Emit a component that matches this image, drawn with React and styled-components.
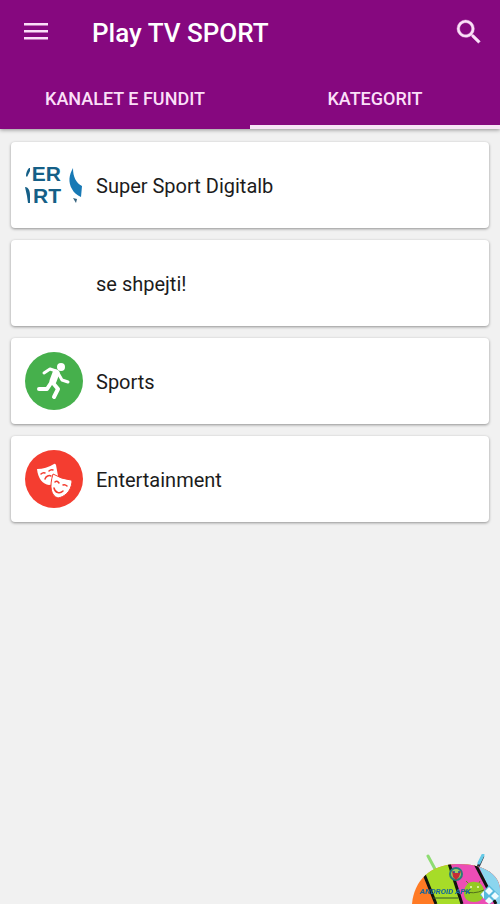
import React, { useState } from 'react';
import styled, { createGlobalStyle } from 'styled-components';

const colors = {
  primary: '#86087f',
  background: '#f1f1f1',
  white: '#ffffff',
  lilac: '#fbdff8',
  indicator: '#f6e4f5',
  text: '#1c1c1c',
  green: '#46b04c',
  red: '#f43d30',
  logoBlue: '#155f87',
};

const GlobalStyle = createGlobalStyle`
  body {
    margin: 0;
    background: ${colors.background};
    font-family: Roboto, "Liberation Sans", sans-serif;
  }

  * {
    box-sizing: border-box;
  }
`;

const Header = styled.header`
  background: ${colors.primary};
  box-shadow: 0 1px 4px rgba(0, 0, 0, 0.4);
`;

const Toolbar = styled.div`
  display: flex;
  align-items: center;
  height: 68px;
  padding: 0 15px 4px 20px;
`;

const IconButton = styled.button`
  display: flex;
  padding: 0;
  border: none;
  background: none;
  color: ${colors.lilac};
  cursor: pointer;
`;

const Title = styled.h1`
  flex: 1;
  margin: 0;
  padding: 2px 0 0 40px;
  color: ${colors.white};
  font-size: 26px;
  font-weight: 500;
  line-height: 32px;
`;

const Tabs = styled.div`
  display: flex;
`;

const Tab = styled.button`
  flex: 1;
  height: 61px;
  padding: 5px 0 0;
  border: none;
  border-bottom: 4px solid ${({ $active }) => ($active ? colors.indicator : 'transparent')};
  background: none;
  color: ${colors.lilac};
  font-family: inherit;
  font-size: 18px;
  font-weight: 500;
  line-height: 24px;
  cursor: pointer;
`;

const CategoryList = styled.ul`
  display: flex;
  flex-direction: column;
  gap: 12px;
  margin: 0;
  padding: 13px 11px;
  list-style: none;
`;

const CategoryCard = styled.button`
  display: flex;
  align-items: center;
  gap: 13px;
  width: 100%;
  height: 86px;
  padding: 0 14px;
  border: none;
  border-radius: 4px;
  background: ${colors.white};
  box-shadow: 0 1px 3px rgba(0, 0, 0, 0.4);
  color: ${colors.text};
  font-family: inherit;
  font-size: 20px;
  line-height: 26px;
  text-align: left;
  cursor: pointer;
`;

const CategoryIcon = styled.span`
  display: flex;
  flex: none;
  width: 58px;
  height: 58px;
`;

const CategoryName = styled.span`
  padding-top: 1px;
`;

const AppBadge = styled.div`
  position: fixed;
  right: 0;
  bottom: 0;
  display: flex;
`;

function MenuIcon() {
  return (
    <svg width="32" height="32" viewBox="0 0 32 32" fill="currentColor" aria-hidden="true">
      <path d="M4 7h24v2.5H4zM4 14h24v2.5H4zM4 21h24v2.5H4z" />
    </svg>
  );
}

function SearchIcon() {
  return (
    <svg width="32" height="32" viewBox="0 0 24 24" fill="currentColor" aria-hidden="true">
      <path
        d="M15.5 14h-.79l-.28-.27A6.47 6.47 0 0 0 16 9.5 6.5 6.5 0 1 0 9.5 16c1.61 0 3.09-.59 4.23-1.57l.27.28v.79l5 4.99L20.49 19l-4.99-5zm-6 0C7.01 14 5 11.99 5 9.5S7.01 5 9.5 5 14 7.01 14 9.5 11.99 14 9.5 14z"
        stroke="currentColor"
        strokeWidth="0.3"
      />
    </svg>
  );
}

function SuperSportLogo() {
  return (
    <svg width="58" height="58" viewBox="0 0 58 58" fill={colors.logoBlue} aria-hidden="true">
      <g fontFamily="Liberation Sans, sans-serif" fontWeight="700" fontSize="21" textAnchor="end">
        <text x="36" y="25">ER</text>
        <text x="36" y="47">RT</text>
      </g>
      <path d="M1 20c0-3 1-6 3-8h1v3l-3 6zM0 31c3 0 5 3 5 8v8H3l-1-7z" />
      <path d="M48 12c-4 7-5 14-1 21 2 4 5 6 9 8l1-11c-6-3-9-9-9-18z" fill="#1779b5" />
      <path d="M48 42l4 1-1 4z" fill="#35627d" />
    </svg>
  );
}

function SportsIcon() {
  return (
    <svg width="58" height="58" viewBox="0 0 58 58" aria-hidden="true">
      <circle cx="29" cy="29" r="29" fill={colors.green} />
      <circle cx="36" cy="15" r="4" fill={colors.white} />
      <g fill="none" stroke={colors.white} strokeLinecap="round" strokeLinejoin="round">
        <path d="M19 21l6-4 6 2M33 21l4 7 6 2" strokeWidth="3" />
        <path d="M31 21l-3 8" strokeWidth="7" />
        <path d="M28 31l5 6-4 8M26 31l-4 6h-8" strokeWidth="4" />
      </g>
    </svg>
  );
}

function MasksIcon() {
  return (
    <svg width="58" height="58" viewBox="0 0 58 58" aria-hidden="true">
      <circle cx="29" cy="29" r="29" fill={colors.red} />
      <path
        d="M12 19q9 0 17-5 1-1 2 1l2 11q-2 9-9 9c-6-1-11-6-12-16z"
        fill={colors.white}
      />
      <path
        d="M16 24q2-2 4-1M24 21q2-2 4-1M20 29c1-3 4-4 6-3"
        fill="none"
        stroke={colors.red}
        strokeWidth="1.5"
        strokeLinecap="round"
      />
      <path
        d="M28 24q8 5 18 6 1 0 1 2c-1 10-8 15-14 16-7-2-9-11-5-24z"
        fill={colors.white}
        stroke={colors.red}
        strokeWidth="1"
      />
      <path
        d="M30 32q2-2 4 1M38 35q2-1 4 1M29 38c1 5 6 6 9 3"
        fill="none"
        stroke={colors.red}
        strokeWidth="1.5"
        strokeLinecap="round"
      />
    </svg>
  );
}

function AndroidBadge() {
  return (
    <svg width="88" height="50" viewBox="0 0 88 50" role="img" aria-label="Android APK">
      <defs>
        <clipPath id="head">
          <path d="M0 50C2 26 19 10 46 10s41 11 42 25v15z" />
        </clipPath>
      </defs>
      <path d="M16 2l7 13" stroke="#8edc72" strokeWidth="3" strokeLinecap="round" />
      <path d="M71 2l-5 11" stroke="#29303a" strokeWidth="3" />
      <path d="M71 1l-4 8" stroke="#66cbe8" strokeWidth="3" strokeLinecap="round" />
      <g clipPath="url(#head)">
        <path d="M0 0h88v50H0z" fill="#ff7a24" />
        <path d="M4 0h84v50H24z" fill="#a7dc28" />
        <path d="M34 0h54v50H50z" fill="#ec4db5" />
        <path d="M61 0h27v50H84z" fill="#8bd5ee" />
        <path d="M4 0l20 50M34 0l16 50M60 4l24 46" stroke="#11130f" strokeWidth="3" />
      </g>
      <circle cx="44" cy="20" r="6" fill="#9acb64" stroke="#287b78" strokeWidth="2" />
      <path d="M40 17l3 2h3l3-2-2 6-3 3-3-3z" fill="#c52c35" />
      <circle cx="42" cy="18" r="1" fill="#294a9a" />
      <circle cx="47" cy="18" r="1" fill="#294a9a" />
      <path d="M21 44h25" stroke="#35562c" strokeWidth="1" />
      <path d="M54 27l3 3M68 27l-2 4" stroke="#678c1b" strokeWidth="1" />
      <path d="M52 39c0-7 5-12 11-11 6 0 9 5 9 10 0 7-4 10-10 10s-10-3-10-9z" fill="#94ca24" />
      <path d="M52 37q9 4 20-1" fill="none" stroke="#526d1a" strokeWidth="1" />
      <circle cx="59" cy="33" r="1" fill="#eefac5" />
      <circle cx="66" cy="33" r="1" fill="#eefac5" />
      <text
        x="8"
        y="40"
        fill="#17669a"
        fontFamily="Roboto, sans-serif"
        fontSize="8"
        fontStyle="italic"
        fontWeight="700"
      >
        ANDROID APK
      </text>
      <path d="M77 31l10 10-9 9-10-9z" fill="#57b9dc" />
      <path
        d="M77 33l4 4-4 4-4-4zM83 38l4 4-4 4-4-4zM77 43l4 4-4 3-4-3zM69 40l3-3v8z"
        fill="#effcff"
      />
    </svg>
  );
}

const tabs = ['KANALET E FUNDIT', 'KATEGORIT'];

const categories = [
  { name: 'Super Sport Digitalb', icon: <SuperSportLogo /> },
  { name: 'se shpejti!', icon: null },
  { name: 'Sports', icon: <SportsIcon /> },
  { name: 'Entertainment', icon: <MasksIcon /> },
];

export default function App() {
  const [activeTab, setActiveTab] = useState(tabs[1]);

  return (
    <>
      <GlobalStyle />
      <Header>
        <Toolbar>
          <IconButton aria-label="Menu">
            <MenuIcon />
          </IconButton>
          <Title>Play TV SPORT</Title>
          <IconButton aria-label="Search">
            <SearchIcon />
          </IconButton>
        </Toolbar>
        <Tabs role="tablist">
          {tabs.map((tab) => (
            <Tab
              key={tab}
              role="tab"
              aria-selected={tab === activeTab}
              $active={tab === activeTab}
              onClick={() => setActiveTab(tab)}
            >
              {tab}
            </Tab>
          ))}
        </Tabs>
      </Header>
      <main>
        <CategoryList>
          {categories.map(({ name, icon }) => (
            <li key={name}>
              <CategoryCard>
                <CategoryIcon>{icon}</CategoryIcon>
                <CategoryName>{name}</CategoryName>
              </CategoryCard>
            </li>
          ))}
        </CategoryList>
      </main>
      <AppBadge>
        <AndroidBadge />
      </AppBadge>
    </>
  );
}
